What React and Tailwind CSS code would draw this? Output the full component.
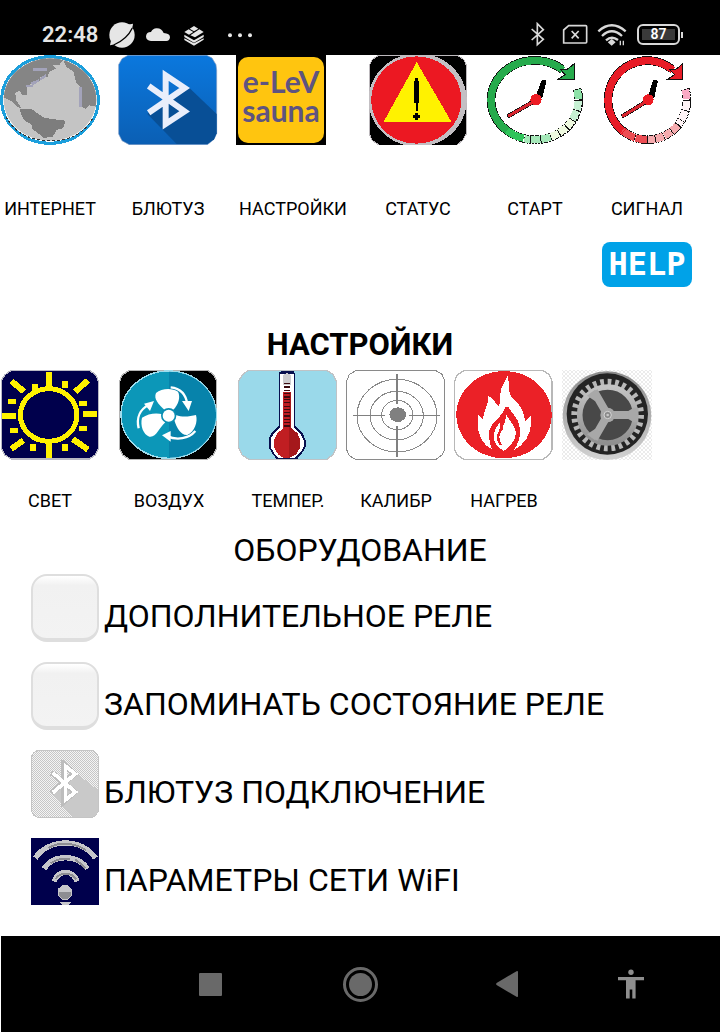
import { useState } from 'react';

function GlobeIcon() {
  return (
    <svg viewBox="0 15 300 270" className="h-[90px] w-[100px]" shapeRendering="crispEdges" aria-hidden="true">
      <defs>
        <clipPath id="globeDisc">
          <ellipse cx="150" cy="149" rx="139" ry="124" />
        </clipPath>
      </defs>
      <ellipse cx="150" cy="150" rx="145" ry="130" fill="#fff" stroke="#1c9fdc" strokeWidth="9" />
      <g clipPath="url(#globeDisc)">
        <rect x="8" y="20" width="284" height="260" fill="#c4c4c4" />
        <path d="M4 140L14 95L40 50L90 20L188 18V32L178 45L160 46L168 56L148 66L142 82L122 80L118 95L98 96L80 115L82 134L66 134L60 122L46 128L48 150L64 174L54 172L36 154Z" fill="#858585" />
        <path d="M60 178H96L112 190L134 204L196 212L190 234L170 240L158 260L132 264L114 250L98 238L94 222L74 212L62 190Z" fill="#7d7d7d" />
        <path d="M190 30L232 38L270 70L300 116V170H286L268 166L256 176L236 164L244 116L228 96L220 64L198 50Z" fill="#858585" />
        <path d="M100 55H142L140 62H98ZM78 106H100V112H78ZM92 98L116 88L118 94L98 106ZM120 84L138 72V80L122 92ZM236 112H246V170H236Z" fill="#a3a3ba" />
      </g>
      <path d="M18 200C45 250 90 272 150 272C210 272 255 250 281 200" fill="none" stroke="#333" strokeWidth="3" strokeDasharray="9 6" />
    </svg>
  );
}

function BluetoothIcon() {
  return (
    <svg viewBox="354 15 300 270" className="h-[90px] w-[100px]" aria-hidden="true">
      <defs>
        <linearGradient id="btFill" x1="0" y1="0" x2="0" y2="1">
          <stop offset="0" stopColor="#0b78de" />
          <stop offset="1" stopColor="#0b5fb4" />
        </linearGradient>
      </defs>
      <path d="M384 16H620L636 24L648 44L650 60V250L642 268L622 284H388L366 272L356 252V44L366 26Z" fill="url(#btFill)" stroke="#7f9cc4" strokeWidth="2" />
      <path d="M566 112L650 192V250L642 268L622 282H530L442 192L495 150Z" fill="#084f96" />
      <path d="M446 108L554 184L497 222V76L554 114L446 188" fill="none" stroke="#e9eefb" strokeWidth="18" strokeLinejoin="miter" />
    </svg>
  );
}

function WarningIcon() {
  return (
    <svg viewBox="429 15 300 270" className="h-[90px] w-[100px]" shapeRendering="crispEdges" aria-hidden="true">
      <path d="M462 15H696L716 28L725 48V250L714 270L696 285H462L442 272L432 250V48L442 28Z" fill="#000" stroke="#bdb9bd" strokeWidth="3" />
      <ellipse cx="578" cy="150" rx="147" ry="140" fill="#c3bfc3" />
      <ellipse cx="574" cy="150" rx="135" ry="131" fill="#ec1822" />
      <path d="M575 36L679 215H476Z" fill="#fff200" />
      <path d="M571 85H578V94H583V160H579V182H572V160H566V94H571ZM569 190H579V195H584V203H579V209H569V203H564V195H569Z" fill="#000" />
    </svg>
  );
}

function StartIcon() {
  return (
    <svg viewBox="33 15 294 270" className="h-[90px] w-[98px]" shapeRendering="crispEdges" aria-hidden="true">
      <g fill="none" stroke="#111" strokeWidth="26">
        <path d="M116 254A131 119 0 0 1 48 150A131 119 0 0 1 262 58" />
        <path d="M306 117A131 119 0 0 1 116 254" strokeDasharray="6 2" />
      </g>
      <path d="M116 254A131 119 0 0 1 48 150A131 119 0 0 1 264 60" fill="none" stroke="#26ab4c" strokeWidth="22" />
      <path d="M297 42V89H248L270 74L256 58L276 58Z" fill="#26ab4c" stroke="#111" strokeWidth="3" />
      <g fill="none" strokeWidth="22">
        <path d="M146 265A131 119 0 0 1 96 242" stroke="#2fc45a" />
        <path d="M226 261A131 119 0 0 1 148 266" stroke="#a5e8b9" strokeDasharray="28 3" />
        <path d="M291 211A131 119 0 0 1 228 260" stroke="#effae0" strokeDasharray="25 3" />
        <path d="M310 152A131 119 0 0 1 292 208" stroke="#c6f0d3" strokeDasharray="28 3" />
        <path d="M306 119A131 119 0 0 1 310 147" stroke="#8ee2a8" />
      </g>
      <path d="M182 146L202 92L212 94L200 140Z" fill="#000" stroke="#000" strokeWidth="5" />
      <path d="M184 150L97 200" stroke="#111" strokeWidth="13" />
      <path d="M184 150L99 199" stroke="#d7262f" strokeWidth="9" />
      <circle cx="183" cy="149" r="17" fill="#ed1c24" />
    </svg>
  );
}

function SignalIcon() {
  return (
    <svg viewBox="381 15 270 270" className="h-[90px] w-[90px]" shapeRendering="crispEdges" aria-hidden="true">
      <g fill="none" stroke="#111" strokeWidth="26">
        <path d="M460 254A118 119 0 0 1 399 150A118 119 0 0 1 591 58" />
        <path d="M631 117A118 119 0 0 1 460 254" strokeDasharray="6 2" />
      </g>
      <path d="M460 254A118 119 0 0 1 399 150A118 119 0 0 1 593 60" fill="none" stroke="#e81c27" strokeWidth="22" />
      <path d="M623 42V89H576L598 74L584 58L602 58Z" fill="#e81c27" stroke="#111" strokeWidth="3" />
      <g fill="none" strokeWidth="22">
        <path d="M517 269A118 119 0 0 1 442 242" stroke="#ec4d53" strokeDasharray="36 3" />
        <path d="M608 226A118 119 0 0 1 519 269" stroke="#f6abae" strokeDasharray="24 3" />
        <path d="M635 152A118 119 0 0 1 610 223" stroke="#fff4f6" strokeDasharray="28 3" />
        <path d="M631 119A118 119 0 0 1 635 147" stroke="#f9a9c4" />
      </g>
      <path d="M520 146L536 92L546 94L536 140Z" fill="#000" stroke="#000" strokeWidth="5" />
      <path d="M522 150L440 200" stroke="#111" strokeWidth="13" />
      <path d="M522 150L442 199" stroke="#d7262f" strokeWidth="9" />
      <circle cx="520" cy="149" r="16" fill="#ed1c24" />
    </svg>
  );
}

function LightIcon() {
  return (
    <svg viewBox="0 15 300 270" className="h-[90px] w-[100px]" shapeRendering="crispEdges" aria-hidden="true">
      <path d="M32 17H270L288 30L295 48V250L286 270L268 282H34L14 270L4 250V48L14 30Z" fill="#00004c" stroke="#b9b9c4" strokeWidth="4" />
      <ellipse cx="146" cy="150" rx="85" ry="79" fill="none" stroke="#fff200" strokeWidth="15" />
      <g stroke="#fff200" strokeWidth="18">
        <path d="M146 20V66M146 232V280M5 153H48M249 147H291M34 48L72 80M264 46L226 80M34 252L70 226M264 254L218 222" />
      </g>
      <g fill="#fff200">
        <rect x="96" y="58" width="18" height="20" />
        <rect x="186" y="48" width="17" height="20" />
        <rect x="24" y="101" width="24" height="16" />
        <rect x="238" y="108" width="23" height="15" />
        <rect x="30" y="188" width="23" height="15" />
        <rect x="238" y="183" width="23" height="15" />
        <rect x="90" y="237" width="17" height="21" />
        <rect x="186" y="237" width="17" height="21" />
      </g>
    </svg>
  );
}

function AirIcon() {
  return (
    <svg viewBox="357 15 300 270" className="h-[90px] w-[100px]" aria-hidden="true">
      <path d="M388 17H624L640 28L650 48V250L640 270L622 283H388L368 270L359 250V48L368 28Z" fill="#000" stroke="#b5b5b5" strokeWidth="4" shapeRendering="crispEdges" />
      <ellipse cx="506" cy="149" rx="143" ry="131" fill="#0c97b8" stroke="#9fdcec" strokeWidth="4" shapeRendering="crispEdges" />
      <path d="M507 20A141 129 0 0 1 507 278Z" fill="#0783ab" />
      <g fill="#fff">
        <path d="M493 134C476 118 460 102 468 84C484 70 516 68 534 80C542 96 536 118 519 135Z" />
        <path d="M528 150C548 158 570 154 588 150C594 170 584 200 562 210C544 212 530 190 523 166Z" />
        <path d="M488 148C468 142 444 146 426 158C420 182 430 208 448 215C470 218 474 192 496 172Z" />
        <circle cx="506" cy="152" r="23" fill="#0a8eb2" />
        <circle cx="506" cy="152" r="18" />
        <path d="M546 108H576L566 138ZM462 108L432 116L450 138ZM512 198L486 211L512 230Z" />
      </g>
      <g fill="none" stroke="#fff" strokeWidth="7">
        <path d="M512 67C542 70 558 88 562 118M416 190C408 156 422 132 446 120M586 198C566 222 530 226 502 214" />
      </g>
    </svg>
  );
}

function ThermometerIcon() {
  return (
    <svg viewBox="24 15 300 270" className="h-[90px] w-[100px]" shapeRendering="crispEdges" aria-hidden="true">
      <path d="M54 17H292L308 28L319 48V248L308 270L290 283H56L36 270L26 248V48L38 28Z" fill="#9ad9ea" stroke="#bfc3c6" strokeWidth="4" />
      <path d="M146 184V24L154 18H190L196 28V184L218 204L227 226V246L216 264L202 282H140L126 264L116 246V222L126 202Z" fill="#08104e" />
      <path d="M151 188V26H191V188L212 206L221 226V246L210 264L194 280H146L132 264L122 246V222L132 204Z" fill="#fff" />
      <path d="M158 30L170 24L184 30V60H158Z" fill="#cdcdcf" />
      <path d="M159 80H184V190L202 204L211 224V248L198 268L180 278H160L144 268L133 248V224L142 204L159 192Z" fill="#c01e22" />
      <path d="M176 80H184V190L202 204L211 224V248L198 268L180 278H176Z" fill="#a5181b" />
      <path d="M171 54V190" stroke="#3c0c10" strokeWidth="18" strokeDasharray="3 7 5 5 3 6" />
    </svg>
  );
}

function CalibrationIcon() {
  return (
    <svg viewBox="348 15 300 270" className="h-[90px] w-[100px]" shapeRendering="crispEdges" aria-hidden="true">
      <g fill="none" stroke="#8a8a8a" strokeWidth="3">
        <path d="M378 17H618L636 28L644 48V254L636 270L618 283H376L358 272L350 254V48L358 28Z" />
        <ellipse cx="501" cy="152" rx="120" ry="109" />
        <ellipse cx="500" cy="152" rx="80" ry="73" />
        <ellipse cx="502" cy="150" rx="47" ry="44" />
      </g>
      <path d="M501 28V118M501 182V276M370 152H466M538 152H631" stroke="#808080" strokeWidth="4" />
      <ellipse cx="503" cy="149" rx="25" ry="22" fill="#808080" />
    </svg>
  );
}

function HeatIcon() {
  return (
    <svg viewBox="27 15 300 270" className="h-[90px] w-[100px]" shapeRendering="crispEdges" aria-hidden="true">
      <path d="M58 17H294L312 28L321 48V254L312 270L294 283H58L38 272L29 254V48L38 28Z" fill="#fff" stroke="#b8b8b8" strokeWidth="4" />
      <ellipse cx="177" cy="149" rx="143" ry="131" fill="#eb2127" />
      <path d="M190 26C184 46 168 60 166 88C164 104 168 114 160 124C152 116 146 102 130 92C132 118 116 138 114 162C108 160 104 152 100 148C92 190 104 236 142 254C122 216 136 184 164 164C180 152 184 140 186 122C192 140 218 150 224 186C228 212 220 238 206 256C244 236 264 200 258 150C252 156 248 164 240 168C238 148 230 120 206 104C186 90 192 54 190 26Z" fill="#fff" />
      <path d="M184 148C190 166 208 176 212 200C214 224 200 240 176 258C148 242 140 220 150 196C156 182 164 174 166 168C168 180 160 196 162 208C166 200 182 178 184 148Z" fill="#fff" />
      <path d="M184 126C178 164 132 172 136 214C138 236 150 248 162 256" fill="none" stroke="#eb2127" strokeWidth="8" />
      <path d="M186 126C200 152 220 166 218 204C216 228 206 244 194 256" fill="none" stroke="#eb2127" strokeWidth="8" />
      <path d="M174 190C156 204 156 226 168 240" fill="none" stroke="#eb2127" strokeWidth="7" />
    </svg>
  );
}

function GearIcon() {
  return (
    <svg viewBox="351 15 270 270" className="h-[90px] w-[90px]" aria-hidden="true">
      <defs>
        <pattern id="gearChecks" width="12" height="12" patternUnits="userSpaceOnUse">
          <rect width="12" height="12" fill="#fff" />
          <path d="M0 0H6V6H0ZM6 6H12V12H6Z" fill="#ebebeb" />
        </pattern>
        <linearGradient id="gearRim" x1="0" y1="0" x2="0" y2="1">
          <stop offset="0" stopColor="#8c8c8c" />
          <stop offset="1" stopColor="#d2d2d2" />
        </linearGradient>
        <linearGradient id="gearMetal" x1="0" y1="0" x2="0" y2="1">
          <stop offset="0" stopColor="#c4c4c4" />
          <stop offset="1" stopColor="#8f8f8f" />
        </linearGradient>
      </defs>
      <rect x="351" y="15" width="270" height="270" fill="url(#gearChecks)" />
      <circle cx="486" cy="152" r="133" fill="url(#gearRim)" />
      <circle cx="487" cy="147" r="122" fill="#242424" />
      <circle cx="488" cy="150" r="98" fill="none" stroke="#b8b8b8" strokeWidth="22" pathLength="56" strokeDasharray="1 1" />
      <circle cx="488" cy="150" r="84" fill="#484848" stroke="url(#gearMetal)" strokeWidth="17" />
      <path d="M488 150H570M488 150L447 79M488 150L447 221" stroke="#a8a8a8" strokeWidth="24" />
      <path d="M426 92L450 74L466 94L450 108ZM426 208L450 226L466 206L450 192ZM566 128H580V172H566L550 162V138Z" fill="#a8a8a8" />
      <circle cx="488" cy="150" r="22" fill="#a8a8a8" />
      <circle cx="488" cy="150" r="11" fill="#8a8a8a" stroke="#d6d6d6" strokeWidth="3" />
      <circle cx="488" cy="150" r="4" fill="#c9c9c9" />
    </svg>
  );
}

function BluetoothOffIcon() {
  return (
    <svg viewBox="93 30 204 204" className="size-[68px] shrink-0" shapeRendering="crispEdges" aria-hidden="true">
      <defs>
        <pattern id="offChecks" width="6" height="6" patternUnits="userSpaceOnUse">
          <rect width="6" height="6" fill="#f4f4f4" />
          <path d="M0 0H3V3H0ZM3 3H6V6H3Z" fill="#c6c6c6" />
        </pattern>
      </defs>
      <path d="M112 31H278L290 40L296 52V214L286 226L276 233H114L102 226L94 214V50L102 38Z" fill="url(#offChecks)" stroke="#c4c4c4" strokeWidth="3" />
      <path d="M234 104L294 150V214L286 226L276 232H220L154 160L190 130Z" fill="#c9c9c9" />
      <path d="M154 98L224 156L192 184V74L224 102L154 158" fill="none" stroke="#bdbdbd" strokeWidth="17" />
      <path d="M158 98L226 156L196 180V78L226 102L158 158" fill="none" stroke="#fff" strokeWidth="11" />
    </svg>
  );
}

function WifiIcon() {
  return (
    <svg viewBox="93 294 204 204" className="size-[68px] shrink-0" shapeRendering="crispEdges" aria-hidden="true">
      <rect x="93" y="294" width="204" height="201" fill="#00004c" />
      <g fill="none" stroke="#c6c6ca" strokeWidth="16">
        <path d="M106 354C148 294 246 294 286 354M132 386C160 342 232 342 262 386M162 424C178 388 216 388 232 424" />
      </g>
      <g fill="none" stroke="#8d8d92" strokeWidth="6">
        <path d="M146 324C180 304 220 308 258 330M152 370C180 352 196 354 210 358M226 358L256 384M166 418C182 394 212 396 230 418" />
      </g>
      <path d="M188 434H202L215 446V468L202 480H188L175 468V446Z" fill="#c6c6ca" />
      <path d="M177 456H212V468L202 476H188L177 468Z" fill="#8d8d92" />
      <path d="M180 485H212V489L206 495H186L180 489Z" fill="#c6c6ca" />
    </svg>
  );
}

function StatusBar() {
  return (
    <header className="flex h-[55px] items-center justify-between bg-black pt-[14px] pr-[37px] pl-[42px] text-[#e6e6e6]">
      <div className="flex items-center">
        <span className="text-[22px] leading-6 font-semibold">22:48</span>
        <svg viewBox="327 62 438 78" className="ml-[10px] h-[26px] w-[146px]" fill="#e6e6e6" aria-hidden="true">
          <circle cx="369" cy="101" r="38" />
          <path d="M386 70L402 67Q402 74 398 84ZM333 132L337 112L352 128Z" />
          <path d="M344 131Q384 114 400 80" fill="none" stroke="#000" strokeWidth="4" />
          <path d="M456 119Q441 118 441 105Q442 92 456 92Q462 81 472 81Q488 80 494 95Q513 96 513 108Q512 119 502 119Z" />
          <path d="M585 74L598 82L585 90L572 82ZM569 84L583 92L570 100L556 92ZM601 84L614 92L588 108L574 102ZM556 100L585 117L614 100V107L585 124L556 107ZM556 111L585 126L614 111L614 115L585 133L556 116Z" />
          <circle cx="693" cy="102" r="6" />
          <circle cx="723" cy="102" r="6" />
          <circle cx="753" cy="102" r="6" />
        </svg>
      </div>
      <div className="flex items-center gap-2.5">
        <svg viewBox="507 68 294 78" className="h-[26px] w-[98px]" fill="none" stroke="#d8d8d8" strokeWidth="5" aria-hidden="true">
          <path d="M515 89L550 120L532 136V73L550 91L515 122" />
          <path d="M611 131V92L626 79H677Q680 79 680 82V128Q680 131 677 131Z" />
          <path d="M635 95L656 117M656 95L635 117" />
          <path d="M715 96Q755 60 797 96M726 110Q755 82 786 110M738 123Q755 108 774 122" strokeWidth="7" />
          <path d="M755 122L763 129L755 136L747 129Z" fill="#d8d8d8" />
          <path d="M781 124V138M790 124V138" strokeWidth="4" />
        </svg>
        <div className="flex items-center gap-px">
          <span className="flex h-[21px] w-[43px] items-center justify-center rounded-[6px] border-2 border-[#d8d8d8] bg-black p-[3px]">
            <span className="w-full bg-[#3a3a3a] text-center text-[14px] leading-[11px] font-semibold text-white">87</span>
          </span>
          <span className="h-1.5 w-0.5 bg-[#d8d8d8]" />
        </div>
      </div>
    </header>
  );
}

function MenuButton({ label, children, className }) {
  return (
    <button type="button" className={`flex flex-col text-[18px] leading-6 ${className}`}>
      {children}
      <span className="self-center">{label}</span>
    </button>
  );
}

function RelayOption({ id, label }) {
  const [checked, setChecked] = useState(false);

  return (
    <div className="flex items-center gap-[5px]">
      <input
        id={id}
        type="checkbox"
        checked={checked}
        onChange={(e) => setChecked(e.target.checked)}
        className="size-[68px] shrink-0 appearance-none rounded-2xl border-2 border-b-4 border-[#dedede] bg-linear-to-b from-white via-[#f1f1f1] via-15% to-[#f3f3f3] checked:bg-[#c8e6c9]"
      />
      <label htmlFor={id} className="pt-4">{label}</label>
    </div>
  );
}

function NavBar() {
  return (
    <nav className="mt-auto ml-px grid h-[97px] grid-cols-[150fr_150fr_142fr_106fr] items-center justify-items-center border-b border-white bg-black pr-9 pl-[134px]">
      <button type="button" aria-label="Recent apps" className="size-[23px] rounded-[1px] bg-[#696969]" />
      <button type="button" aria-label="Home" className="flex size-[35px] items-center justify-center rounded-full border-3 border-[#696969]">
        <span className="size-[23px] rounded-full bg-[#696969]" />
      </button>
      <button type="button" aria-label="Back">
        <svg viewBox="0 0 22 26" className="h-[26px] w-[22px]" fill="#696969">
          <path d="M20.5 0.3Q22 -0.3 22 1V25Q22 26.3 20.5 25.7L0.6 14Q-0.3 13 0.6 12Z" />
        </svg>
      </button>
      <button type="button" aria-label="Accessibility">
        <svg viewBox="0 0 26 30" className="h-[30px] w-[26px]" fill="#8e8e8e">
          <circle cx="13" cy="3.2" r="2.7" />
          <path d="M0 8H26V11.3H17.6V29.5H14.3V20.5H11.7V29.5H8V11.3H0Z" />
        </svg>
      </button>
    </nav>
  );
}

function App() {
  return (
    <div className="flex min-h-screen flex-col bg-white font-['Roboto',sans-serif] text-black">
      <StatusBar />
      <main>
        <div className="grid grid-cols-[100fr_100fr_114fr_100fr_98fr_90fr] gap-x-[18px] pr-7">
          <MenuButton label="ИНТЕРНЕТ" className="gap-[52px]"><GlobeIcon /></MenuButton>
          <MenuButton label="БЛЮТУЗ" className="gap-[52px]"><BluetoothIcon /></MenuButton>
          <MenuButton label="НАСТРОЙКИ" className="gap-[52px]">
            <span className="size-[90px] bg-black p-0.5">
              <span className="block size-full rounded-[10px] bg-[#ffc50f] pt-2.5 text-center font-['Lato',sans-serif] text-[30px] leading-[29px] font-bold text-[#5e5480]">
                e-LeV sauna
              </span>
            </span>
          </MenuButton>
          <MenuButton label="СТАТУС" className="gap-[52px]"><WarningIcon /></MenuButton>
          <MenuButton label="СТАРТ" className="gap-[52px]"><StartIcon /></MenuButton>
          <MenuButton label="СИГНАЛ" className="gap-[52px]"><SignalIcon /></MenuButton>
        </div>

        <div className="mt-[21px] flex justify-end pr-7">
          <button
            type="button"
            className="h-[45px] w-[90px] rounded-lg bg-[#00a2e8] font-['DejaVu_Sans_Mono',monospace] text-[32px] leading-[45px] font-bold text-white"
          >
            HELP
          </button>
        </div>

        <h1 className="mt-10 text-center text-[31px] leading-9 font-bold">НАСТРОЙКИ</h1>
        <div className="mt-[7px] grid grid-cols-[111fr_111fr_100fr_100fr_100fr_90fr] items-start gap-x-2 pr-17">
          <MenuButton label="СВЕТ" className="w-[100px] gap-[29px]"><LightIcon /></MenuButton>
          <MenuButton label="ВОЗДУХ" className="w-[100px] gap-[29px]"><AirIcon /></MenuButton>
          <MenuButton label="ТЕМПЕР." className="w-[100px] gap-[29px]"><ThermometerIcon /></MenuButton>
          <MenuButton label="КАЛИБР" className="w-[100px] gap-[29px]"><CalibrationIcon /></MenuButton>
          <MenuButton label="НАГРЕВ" className="w-[100px] gap-[29px]"><HeatIcon /></MenuButton>
          <button type="button" aria-label="Gear"><GearIcon /></button>
        </div>

        <h2 className="mt-[19px] text-center text-[32px] leading-9">ОБОРУДОВАНИЕ</h2>
        <div className="mt-1.5 flex flex-col items-start gap-5 pl-[31px] text-[32px] leading-9">
          <RelayOption id="extra-relay" label="ДОПОЛНИТЕЛЬНОЕ РЕЛЕ" />
          <RelayOption id="keep-relay" label="ЗАПОМИНАТЬ СОСТОЯНИЕ РЕЛЕ" />
          <button type="button" className="flex items-center gap-[5px]">
            <BluetoothOffIcon />
            <span className="pt-4">БЛЮТУЗ ПОДКЛЮЧЕНИЕ</span>
          </button>
          <button type="button" className="flex items-center gap-[5px]">
            <WifiIcon />
            <span className="pt-4">ПАРАМЕТРЫ СЕТИ WiFI</span>
          </button>
        </div>
      </main>
      <NavBar />
    </div>
  );
}

export default App;
